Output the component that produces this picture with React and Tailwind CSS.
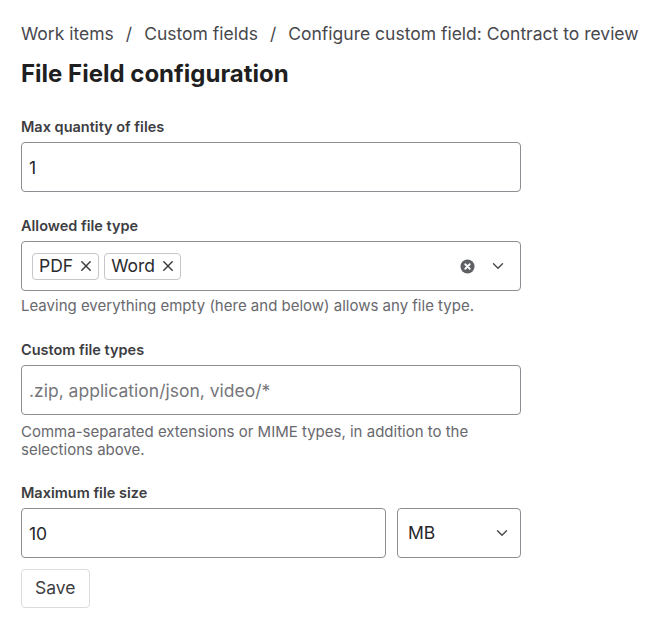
import React from "react";

const ChevronDown = ({ className = "" }) => (
    <svg viewBox="0 0 12 8" width="12" height="8" className={className} fill="none" stroke="currentColor" strokeWidth="1.4" strokeLinecap="round" strokeLinejoin="round">
        <path d="M1.5 1.8 6 6.2l4.5-4.4" />
    </svg>
);

const ClearIcon = () => (
    <svg viewBox="0 0 16 16" width="15" height="15">
        <circle cx="8" cy="8" r="7.5" fill="#5f6064" />
        <path d="M5.6 5.6l4.8 4.8M10.4 5.6l-4.8 4.8" stroke="#fff" strokeWidth="1.9" strokeLinecap="round" />
    </svg>
);

const Chip = ({ label }) => (
    <span className="flex items-center gap-[7px] h-[27px] pl-[6px] pr-[6px] border border-[#c6c6ca] rounded-[4px] text-[17.5px] text-[#2b2b2e]">
        {label}
        <svg viewBox="0 0 10 10" width="12" height="12" fill="none" stroke="#3a3a3d" strokeWidth="1.2" strokeLinecap="round">
            <path d="M1.5 1.5l7 7M8.5 1.5l-7 7" />
        </svg>
    </span>
);

const Label = ({ children }) => (
    <div className="text-[14.5px] font-semibold text-[#3d3d42] leading-[20px] mb-[5px]">{children}</div>
);

const Help = ({ children, className = "mt-[6px]" }) => (
    <p className={"text-[15px] leading-[18px] text-[#68686d] " + className}>{children}</p>
);

const inputCls = "w-full h-[50px] px-[7px] border border-[#8d8d93] rounded-[4px] text-[17.5px] text-[#26262a] bg-white outline-none placeholder:text-[#76767b]";

export default function App() {
    return (
        <div className="min-h-[627px] bg-white px-[21px] pt-[21px]" style={{ fontFamily: "Inter, 'Noto Sans', sans-serif" }}>
            {/* Breadcrumb */}
            <nav className="flex items-center text-[17.5px] leading-[26px] text-[#48484d] whitespace-nowrap">
                <span>Work items</span>
                <span className="mx-[12px]">/</span>
                <span>Custom fields</span>
                <span className="mx-[12px]">/</span>
                <span>Configure custom field: Contract to review</span>
            </nav>
            <h1 className="mt-[12px] text-[24px] leading-[30px] font-bold text-[#1f1f22]">File Field configuration</h1>

            <form className="w-[500px] mt-[28px]" onSubmit={e => e.preventDefault()}>
                {/* Max quantity */}
                <Label>Max quantity of files</Label>
                <input className={inputCls} defaultValue="1" />

                {/* Allowed types */}
                <div className="mt-[24px]">
                    <Label>Allowed file type</Label>
                    <div className="h-[50px] flex items-center border border-[#8d8d93] rounded-[4px] pl-[10px] pr-[16px]">
                        <div className="flex gap-[5px] flex-1">
                            <Chip label="PDF" />
                            <Chip label="Word" />
                        </div>
                        <ClearIcon />
                        <ChevronDown className="ml-[17px] text-[#4a4a4e]" />
                    </div>
                    <Help>Leaving everything empty (here and below) allows any file type.</Help>
                </div>

                {/* Custom types */}
                <div className="mt-[25px]">
                    <Label>Custom file types</Label>
                    <input className={inputCls} placeholder=".zip, application/json, video/*" />
                    <Help className="mt-[8px]">Comma-separated extensions or MIME types, in addition to the selections above.</Help>
                </div>

                {/* Max size */}
                <div className="mt-[24px]">
                    <Label>Maximum file size</Label>
                    <div className="flex gap-[11px]">
                        <input className={inputCls + " flex-1"} defaultValue="10" />
                        <div className="w-[124px] h-[50px] flex items-center justify-between border border-[#8d8d93] rounded-[4px] pl-[10px] pr-[12px] text-[17.5px] text-[#26262a]">
                            MB
                            <ChevronDown className="text-[#4a4a4e]" />
                        </div>
                    </div>
                </div>

                <button className="mt-[11px] h-[39px] px-[13px] border border-[#dcdcdf] rounded-[4px] text-[17.5px] text-[#3d3d42] bg-white">
                    Save
                </button>
            </form>
        </div>
    );
}
